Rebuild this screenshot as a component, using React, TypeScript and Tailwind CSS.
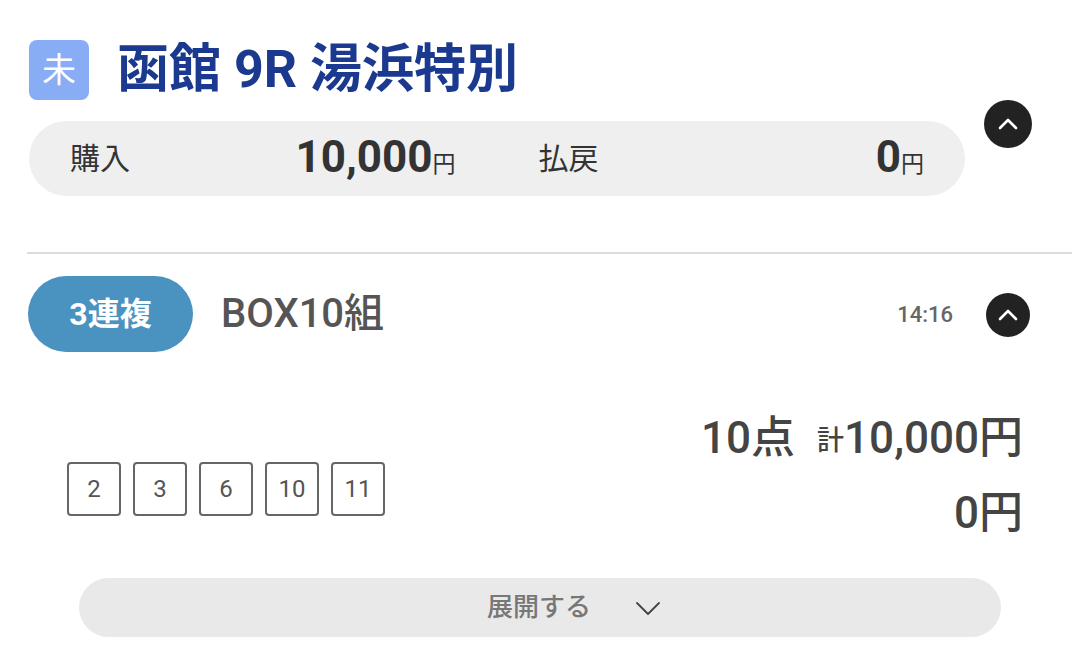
import React from "react";

const font = { fontFamily: "Roboto, 'Noto Sans CJK JP', sans-serif" };

function UpCircle({ size }: { size: number }) {
  return (
    <div
      className="flex items-center justify-center rounded-full bg-[#222222] shrink-0"
      style={{ width: size, height: size }}
    >
      <svg width="22" height="14" viewBox="0 0 22 14" fill="none">
        <path d="M3 11 L11 3 L19 11" stroke="white" strokeWidth="2.6" strokeLinecap="round" strokeLinejoin="round" />
      </svg>
    </div>
  );
}

export default function App() {
  const nums = ["2", "3", "6", "10", "11"];
  return (
    <div className="w-[1072px] h-[655px] bg-white overflow-hidden" style={font}>
      <div className="pt-[40px] pl-[29px]">
        <div className="flex items-center h-[60px]">
          <div className="w-[60px] h-[60px] rounded-[8px] bg-[#88adf5] flex items-center justify-center text-white text-[34px] leading-none">
            未
          </div>
          <div className="ml-[28px] text-[52px] font-bold text-[#1b3a8f] leading-none whitespace-nowrap">
            函館 9R 湯浜特別
          </div>
        </div>
        <div className="flex items-start pr-[40px]">
          <div className="mt-[21px] h-[75px] w-[936px] rounded-full bg-[#efefef] px-[41px] grid grid-cols-2 gap-x-[83px] items-center text-[#333]">
            <div className="flex items-center justify-between">
              <span className="text-[30px]">購入</span>
              <span className="flex items-baseline">
                <span className="text-[44px] font-bold leading-none">10,000</span>
                <span className="text-[23px]">円</span>
              </span>
            </div>
            <div className="flex items-center justify-between">
              <span className="text-[30px]">払戻</span>
              <span className="flex items-baseline">
                <span className="text-[44px] font-bold leading-none">0</span>
                <span className="text-[23px]">円</span>
              </span>
            </div>
          </div>
          <div className="ml-[19px]">
            <UpCircle size={48} />
          </div>
        </div>
      </div>

      <div className="mt-[56px] ml-[27px] h-[2px] bg-[#dcdcdc]" />

      <div className="pl-[28px] pr-[42px]">
        <div className="mt-[22px] flex items-center h-[76px]">
          <div className="w-[165px] h-[76px] rounded-full bg-[#4a93c0] flex items-center justify-center text-white text-[32px] font-bold">
            3連複
          </div>
          <div className="ml-[28px] text-[40px] font-medium text-[#555]">BOX10組</div>
          <div className="ml-auto text-[22px] font-medium text-[#666] mr-[33px]">14:16</div>
          <div className="mt-[2px]">
            <UpCircle size={44} />
          </div>
        </div>

        <div className="mt-[48px] flex items-start justify-between pr-[7px]">
          <div className="mt-[62px] ml-[39px] flex gap-[12px]">
            {nums.map((n) => (
              <div
                key={n}
                className="w-[54px] h-[54px] border-2 border-[#666] rounded-[4px] flex items-center justify-center text-[24px] text-[#555]"
              >
                {n}
              </div>
            ))}
          </div>
          <div className="flex flex-col items-end text-[#444] font-medium">
            <div className="h-[75px] flex items-center">
              <span className="text-[44px] leading-none">10点</span>
              <span className="text-[27px] leading-none ml-[22px] mt-[8px]">計</span>
              <span className="text-[44px] leading-none">10,000円</span>
            </div>
            <div className="h-[75px] flex items-center text-[44px] leading-none">0円</div>
          </div>
        </div>
      </div>

      <div className="mt-[28px] ml-[79px] w-[922px] h-[59px] rounded-full bg-[#e9e9e9] flex items-center pl-[408px]">
        <span className="text-[26px] font-medium text-[#777]">展開する</span>
        <svg className="ml-[44px]" width="26" height="16" viewBox="0 0 26 16" fill="none">
          <path d="M2 3 L13 14 L24 3" stroke="#444" strokeWidth="1.8" strokeLinecap="round" strokeLinejoin="round" />
        </svg>
      </div>
    </div>
  );
}
